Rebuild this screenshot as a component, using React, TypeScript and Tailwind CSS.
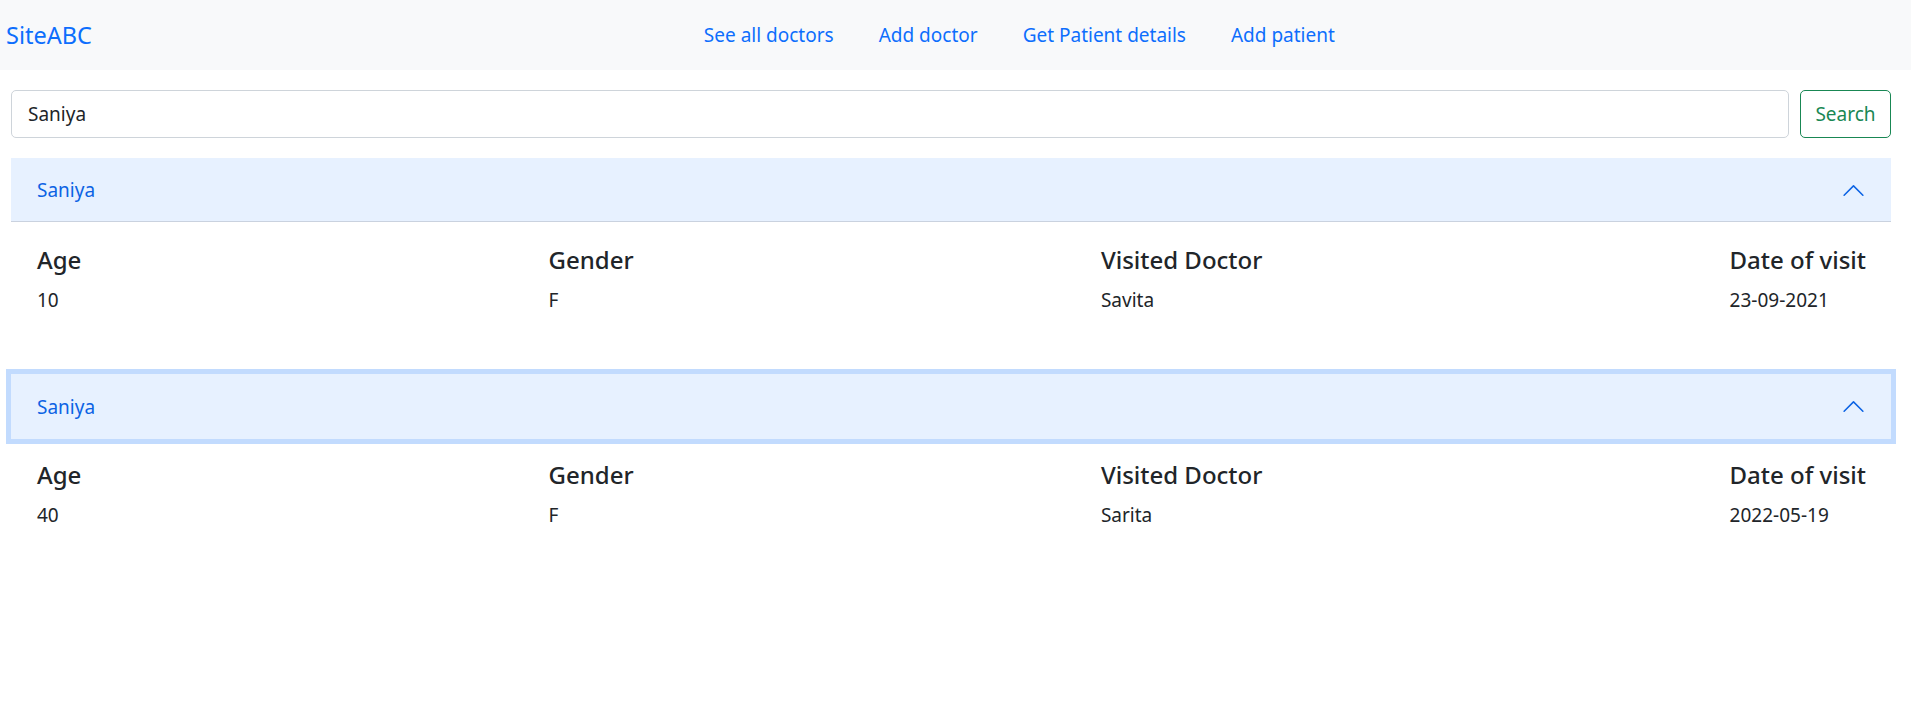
import React from "react";

const font = { fontFamily: '"Segoe UI", "Noto Sans", "Open Sans", sans-serif' };

function ChevronUp() {
  return (
    <svg width="25" height="25" viewBox="0 0 16 16" fill="#0c63e4" className="shrink-0">
      <path
        fillRule="evenodd"
        d="M7.646 4.646a.5.5 0 0 1 .708 0l6 6a.5.5 0 0 1-.708.708L8 5.707l-5.646 5.647a.5.5 0 0 1-.708-.708l6-6z"
      />
    </svg>
  );
}

type Rec = { name: string; age: string; gender: string; doctor: string; date: string };

function Item({ r, focused }: { r: Rec; focused?: boolean }) {
  return (
    <div className="mb-[21px]">
      <div
        className={
          "flex items-center justify-between bg-[#e7f1ff] pl-[26px] pr-[25px] " +
          (focused
            ? "h-[65px] shadow-[0_0_0_5px_rgba(13,110,253,0.25)]"
            : "h-[64px] shadow-[inset_0_-1px_0_rgba(0,0,0,0.125)]")
        }
      >
        <span className="text-[19px] leading-[30px] text-[#0c63e4]">{r.name}</span>
        <ChevronUp />
      </div>
      <div
        className={
          "flex justify-between pl-[26px] pr-[25px] " +
          (focused ? "pt-[21px] pb-[20px]" : "pt-[23px] pb-[18px]")
        }
      >
        {[
          ["Age", r.age],
          ["Gender", r.gender],
          ["Visited Doctor", r.doctor],
          ["Date of visit", r.date],
        ].map(([h, v]) => (
          <div key={h}>
            <h5 className="mb-[10px] text-[24px] font-medium leading-[30px] text-[#212529]">{h}</h5>
            <p className="mb-[20px] text-[19px] leading-[30px] text-[#212529]">{v}</p>
          </div>
        ))}
      </div>
    </div>
  );
}

export default function App() {
  const recs: Rec[] = [
    { name: "Saniya", age: "10", gender: "F", doctor: "Savita", date: "23-09-2021" },
    { name: "Saniya", age: "40", gender: "F", doctor: "Sarita", date: "2022-05-19" },
  ];
  return (
    <div style={font} className="min-h-[701px] bg-white text-[#212529]">
      <nav className="flex h-[70px] items-center bg-[#f8f9fa] pl-[6px]">
        <a className="text-[23.5px] leading-[37px] text-[#0d6efd]">SiteABC</a>
        <div className="ml-[612px] flex items-center gap-[45px] text-[19px] leading-[30px] text-[#0d6efd]">
          <a>See all doctors</a>
          <a>Add doctor</a>
          <a>Get Patient details</a>
          <a>Add patient</a>
        </div>
      </nav>
      <div className="px-[11px] pt-[20px] pr-[20px]">
        <form className="flex gap-[11px]">
          <input
            readOnly
            value="Saniya"
            className="h-[48px] flex-1 rounded-[5px] border border-[#ced4da] bg-white px-[16px] text-[19px] text-[#212529] outline-none"
            style={font}
          />
          <button
            type="button"
            className="h-[48px] w-[91px] rounded-[5px] border border-[#198754] bg-white text-[19px] text-[#198754]"
          >
            Search
          </button>
        </form>
        <div className="mt-[20px]">
          {recs.map((r, i) => (
            <Item key={i} r={r} focused={i === 1} />
          ))}
        </div>
      </div>
    </div>
  );
}
